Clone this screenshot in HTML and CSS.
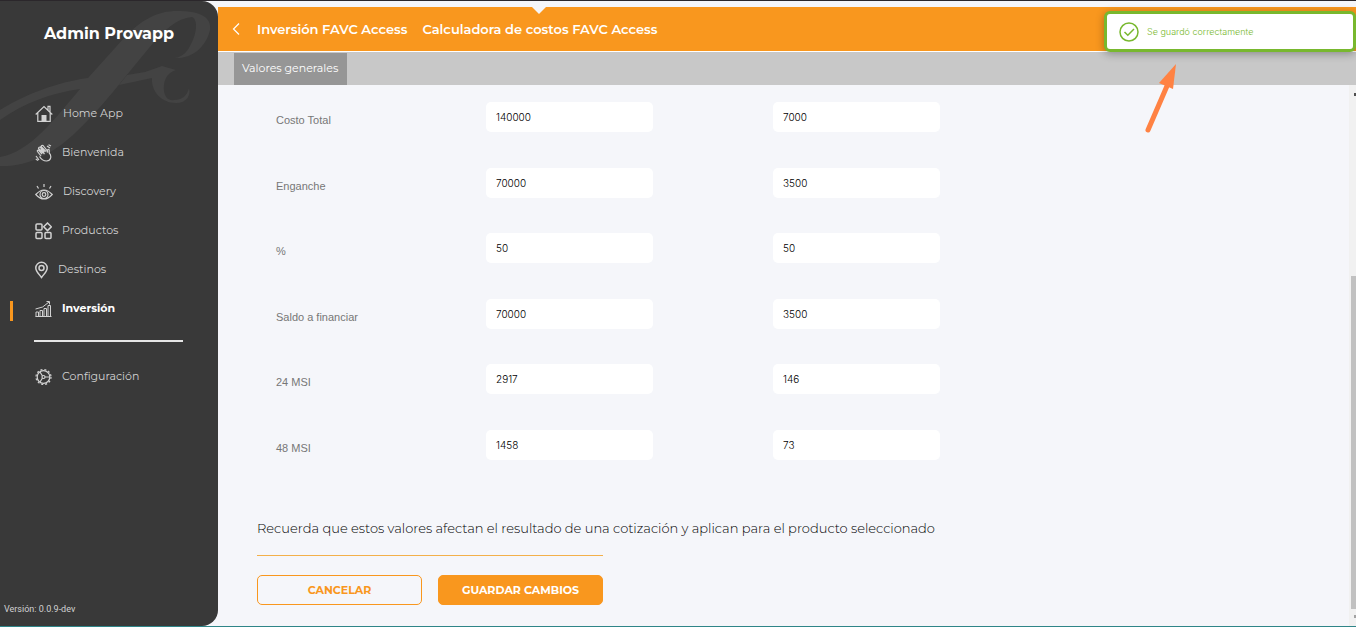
FILE: index.html
```html
<!DOCTYPE html>
<html lang="es">
<head>
    <meta charset="UTF-8">
    <meta name="viewport" content="width=device-width, initial-scale=1.0">
    <title>Admin Provapp</title>
    <link rel="stylesheet" href="styles.css">
</head>
<body>

<aside class="sidebar">
  <svg class="sidebar-mark" viewBox="0 0 218 170" aria-hidden="true">
    <path d="M0 165C28 166 52 153 73 134C101 108 124 77 149 47C164 29 177 17 192 16C199 19 196 35 190 45C187 51 182 56 175 57C192 58 206 46 210 29C212 15 198 10 177 10C158 10 142 18 124 37L88 77C57 81 24 94 0 109V119C24 102 51 92 80 88C57 115 31 151 0 156Z"/>
    <path d="M127 74L145 71L162 65L176 69C166 72 163 81 164 90C165 97 169 100 174 99C182 99 187 95 189 87C191 94 187 102 176 102C162 102 151 91 152 77L119 84Z"/>
  </svg>
  <h1 class="brand">Admin Provapp</h1>
  <nav class="menu">
    <a href="#" class="menu-item">
      <svg width="18" height="18" viewBox="0 0 18 18"><path d="M.7 9.5L9 1.5L17.3 9.5M2.8 8V16.3H15.2V8M13 5V1.3H15V7"/><path class="solid" d="M6.5 10H11.5V16H6.5Z"/></svg>
      Home App
    </a>
    <a href="#" class="menu-item">
      <svg width="17" height="18" viewBox="0 0 17 18"><path d="M6 12L2.500 7.500Q2 6 3.500 6L7 10M8 9L3.500 4.500Q3.500 3 5 3L9.500 8M11 7.500L6 2.500Q6.500 1 8 1.500L12 6.500L12.500 8.500V6Q13.500 4.500 14.200 6V9C17 12 16 17 11.500 17C8 17 6 15 4.500 12.500M5.500 5.500L9.500 10M12 2L15 4M13.500 .800L16 2M1 12L4 16M.800 15L3 16.500"/></svg>
      Bienvenida
    </a>
    <a href="#" class="menu-item">
      <svg width="18" height="18" viewBox="0 0 18 18"><path d="M.8 11.500Q9 2.500 17.200 11.500Q9 20.500 .8 11.500ZM9 1V4M2 3L3.500 5.500M16 3L14.500 5.500"/><circle cx="9" cy="11.500" r="4"/><circle cx="9" cy="11.500" r="1.800"/></svg>
      Discovery
    </a>
    <a href="#" class="menu-item">
      <svg class="bold" width="17" height="18" viewBox="0 0 17 18"><rect x="1" y="2" width="6" height="6" rx="1"/><rect x="1" y="10.500" width="6" height="6" rx="1"/><rect x="10" y="10.500" width="6" height="6" rx="1"/><path d="M12.500 1L16.300 4.800L12.500 8.600L8.700 4.800Z"/></svg>
      Productos
    </a>
    <a href="#" class="menu-item">
      <svg class="bold" width="13" height="18" viewBox="0 0 13 18"><path d="M6.500 16.500C4.500 13.500 .8 10.500 .8 7A5.700 5.700 0 0 1 12.200 7C12.200 10.500 8.500 13.500 6.500 16.500Z"/><circle cx="6.500" cy="7" r="2.500"/></svg>
      Destinos
    </a>
    <a href="#" class="menu-item active">
      <svg class="thin" width="17" height="18" viewBox="0 0 17 18"><path d="M1 16.500V12H3.500V16.500M5 16.500V10.500H7.500V16.500M9 16.500V8.500H11.500V16.500M13 16.500V5.500H15.500V16.500M.500 16.500H16.500M.500 9Q8 8.500 14 2M11.500 1.500H14.500V4.500"/></svg>
      Inversión
    </a>
    <hr class="menu-line">
    <a href="#" class="menu-item">
      <svg width="17" height="18" viewBox="0 0 17 18"><circle cx="8.500" cy="9" r="6.300"/><circle class="teeth" cx="8.500" cy="9" r="7.500"/><circle cx="8.500" cy="9" r="1.500"/><path d="M10 9H15M7.500 8L5 4M7.500 10L5 14"/></svg>
      Configuración
    </a>
  </nav>
  <p class="version">Versión: 0.0.9-dev</p>
</aside>

<main class="main">
  <header class="topbar">
    <a href="#" class="back" aria-label="Regresar">
      <svg width="8" height="12" viewBox="0 0 8 12"><path d="M7 .5L1.500 6L7 11.500"/></svg>
    </a>
    <a href="#" class="topbar-link">Inversión FAVC Access</a>
    <a href="#" class="topbar-link current">Calculadora de costos FAVC Access</a>
  </header>
  <div class="tabs">
    <button type="button" class="tab">Valores generales</button>
  </div>
  <div class="content">
    <form class="calc-form">
      <div class="rows">
        <div class="row">
          <label for="costo">Costo Total</label>
          <input type="text" id="costo" value="140000">
          <input type="text" aria-label="Costo Total 2" value="7000">
        </div>
        <div class="row">
          <label for="enganche">Enganche</label>
          <input type="text" id="enganche" value="70000">
          <input type="text" aria-label="Enganche 2" value="3500">
        </div>
        <div class="row">
          <label for="porcentaje">%</label>
          <input type="text" id="porcentaje" value="50">
          <input type="text" aria-label="% 2" value="50">
        </div>
        <div class="row">
          <label for="saldo">Saldo a financiar</label>
          <input type="text" id="saldo" value="70000">
          <input type="text" aria-label="Saldo a financiar 2" value="3500">
        </div>
        <div class="row">
          <label for="msi24">24 MSI</label>
          <input type="text" id="msi24" value="2917">
          <input type="text" aria-label="24 MSI 2" value="146">
        </div>
        <div class="row">
          <label for="msi48">48 MSI</label>
          <input type="text" id="msi48" value="1458">
          <input type="text" aria-label="48 MSI 2" value="73">
        </div>
      </div>
      <p class="note">Recuerda que estos valores afectan el resultado de una cotización y aplican para el producto seleccionado</p>
      <div class="actions">
        <button type="button" class="btn btn-outline">CANCELAR</button>
        <button type="submit" class="btn">GUARDAR CAMBIOS</button>
      </div>
    </form>
    <div class="scroll-track" aria-hidden="true">
      <span class="scroll-arrow"></span>
      <span class="scroll-thumb"></span>
      <span class="scroll-arrow down"></span>
    </div>
  </div>
</main>

<div class="toast" role="status">
  <svg width="20" height="20" viewBox="0 0 20 20"><circle cx="10" cy="10" r="9"/><path d="M5.500 10L8.800 13.200L15 7"/></svg>
  Se guardó correctamente
</div>
<svg class="pointer" width="34" height="70" viewBox="0 0 34 70" aria-hidden="true">
  <path class="shaft" d="M4 66L23 22"/>
  <path class="head" d="M32 0L29 25L15 19Z"/>
</svg>

</body>
</html>
```
FILE: styles.css
```css
*{
  box-sizing: border-box;
}
body{
  margin: 0;
  height: 100vh;
  display: flex;
  font-family: Montserrat, Inter, sans-serif;
  font-size: 11px;
  background-color: #f5f6fa;
  border-top: 1px solid #2b272b;
  border-bottom: 1px solid #2f8588;
  overflow: hidden;
}
a{
  text-decoration: none;
}
button,
input{
  font-family: inherit;
}
svg{
  fill: none;
  flex: none;
}

/* sidebar */
.sidebar{
  position: relative;
  flex: none;
  width: 218px;
  display: flex;
  flex-direction: column;
  background-color: #393939;
  border-radius: 0 16px 16px 0;
}
.sidebar-mark{
  position: absolute;
  top: 0;
  left: 0;
  width: 100%;
}
.sidebar-mark path{
  fill: #434343;
}
.brand{
  position: relative;
  margin: 21px 0 0;
  font-size: 16px;
  line-height: 24px;
  font-weight: 700;
  color: #FFF;
  text-align: center;
}
.menu{
  position: relative;
  display: flex;
  flex-direction: column;
  margin-top: 47px;
}
.menu-item{
  display: flex;
  align-items: center;
  gap: 10px;
  height: 39px;
  padding-left: 35px;
  color: #d2d2d2;
}
.menu-item svg{
  margin-top: 2px;
  stroke: #d2d2d2;
  stroke-width: 1.2;
}
.menu-item svg.thin{
  stroke-width: 1;
}
.menu-item svg.bold{
  stroke-width: 1.5;
}
.menu-item .solid{
  fill: #d2d2d2;
  stroke: none;
}
.menu-item .teeth{
  stroke-dasharray: 2 2;
}
.menu-item.active{
  position: relative;
  font-weight: 700;
  color: #FFF;
}
.menu-item.active::before{
  content: '';
  position: absolute;
  left: 10px;
  bottom: 6px;
  width: 3px;
  height: 20px;
  background-color: #f9971e;
}
.menu-line{
  width: 149px;
  margin: 13px 0 14px 34px;
  border: 0;
  border-top: 2px solid #e6e6e6;
}
.version{
  margin: auto 0 10px 4px;
  font-family: Roboto, sans-serif;
  font-size: 9px;
  line-height: 14px;
  color: #d2d2d2;
}

/* header */
.main{
  flex: 1;
  min-width: 0;
  display: flex;
  flex-direction: column;
  padding-top: 6px;
}
.topbar{
  display: flex;
  align-items: center;
  gap: 15px;
  height: 45px;
  padding-left: 14px;
  background-color: #f9971e;
  border-bottom: 1px solid #FFF;
}
.back{
  display: flex;
  padding-right: 2px;
}
.back svg{
  stroke: #FFF;
  stroke-width: 1.2;
}
.topbar-link{
  position: relative;
  font-size: 13px;
  font-weight: 600;
  color: #FFF;
}
.topbar-link.current::before{
  content: '';
  position: absolute;
  top: -14px;
  left: 50%;
  margin-left: -8px;
  border: 7px solid transparent;
  border-top-color: #f5f6fa;
  border-bottom: 0;
}
.tabs{
  display: flex;
  height: 33px;
  padding: 1px 0 0 16px;
  background-color: #c8c8c8;
}
.tab{
  border: 0;
  padding: 0 9px 2px 8px;
  font-size: 11px;
  color: #FFF;
  background-color: #969696;
}

/* form */
.content{
  flex: 1;
  min-height: 0;
  display: flex;
}
.calc-form{
  flex: 1;
  display: flex;
  flex-direction: column;
  padding: 17px 39px 21px;
}
.rows{
  flex: 1;
  display: grid;
  grid-auto-rows: 1fr;
}
.row{
  display: grid;
  grid-template-columns: 190px 167px 167px;
  column-gap: 20px;
  align-items: start;
  padding-left: 19px;
}
.row input:last-child{
  margin-left: 100px;
}
.row label{
  padding-top: 10px;
  font-family: "Liberation Sans", Arial, sans-serif;
  font-size: 11px;
  line-height: 16px;
  color: #777;
}
.row input{
  width: 167px;
  height: 30px;
  padding: 0 10px;
  border: 0;
  border-radius: 5px;
  font-family: Inter, sans-serif;
  font-size: 10px;
  font-weight: 300;
  color: #000;
  background-color: #FFF;
}
.note{
  width: fit-content;
  margin: 23px 0 17px;
  font-size: 13px;
  line-height: 20px;
  font-weight: 300;
  color: #000;
}
.actions{
  display: flex;
  gap: 16px;
  width: 346px;
  padding-top: 19px;
  border-top: 1px solid #f3b04a;
}
.btn{
  flex: 1;
  height: 30px;
  padding: 0;
  border: 1px solid #f9971e;
  border-radius: 5px;
  font-size: 11px;
  font-weight: 700;
  color: #FFF;
  background-color: #f9971e;
  cursor: pointer;
}
.btn-outline{
  color: #f9971e;
  background-color: transparent;
}

/* scrollbar */
.scroll-track{
  display: flex;
  flex-direction: column;
  width: 7px;
  padding: 8px 0 8px 2px;
  background-color: #f1f1f1;
  overflow: hidden;
}
.scroll-arrow{
  align-self: flex-end;
  width: 2px;
  height: 3px;
  background-color: #505050;
}
.scroll-arrow.down{
  margin-top: 6px;
  background-color: #a3a3a3;
}
.scroll-thumb{
  height: 333px;
  margin-top: auto;
  background-color: #c1c1c1;
}

/* saved message */
.toast{
  position: absolute;
  top: 11px;
  right: 0;
  display: flex;
  align-items: center;
  gap: 8px;
  width: 252px;
  height: 41px;
  padding-left: 12px;
  border: 3px solid #78b82e;
  border-radius: 6px;
  font-family: Inter, sans-serif;
  font-size: 9px;
  font-weight: 300;
  color: #78b82e;
  background-color: #FFF;
  box-shadow: 0 2px 8px rgba(0, 0, 0, 0.3);
}
.toast svg{
  stroke: #78b82e;
  stroke-width: 1.5;
}
.pointer{
  position: absolute;
  top: 64px;
  right: 178px;
}
.pointer .shaft{
  stroke: #ff8243;
  stroke-width: 5;
  stroke-linecap: round;
}
.pointer .head{
  fill: #ff8243;
}
```
